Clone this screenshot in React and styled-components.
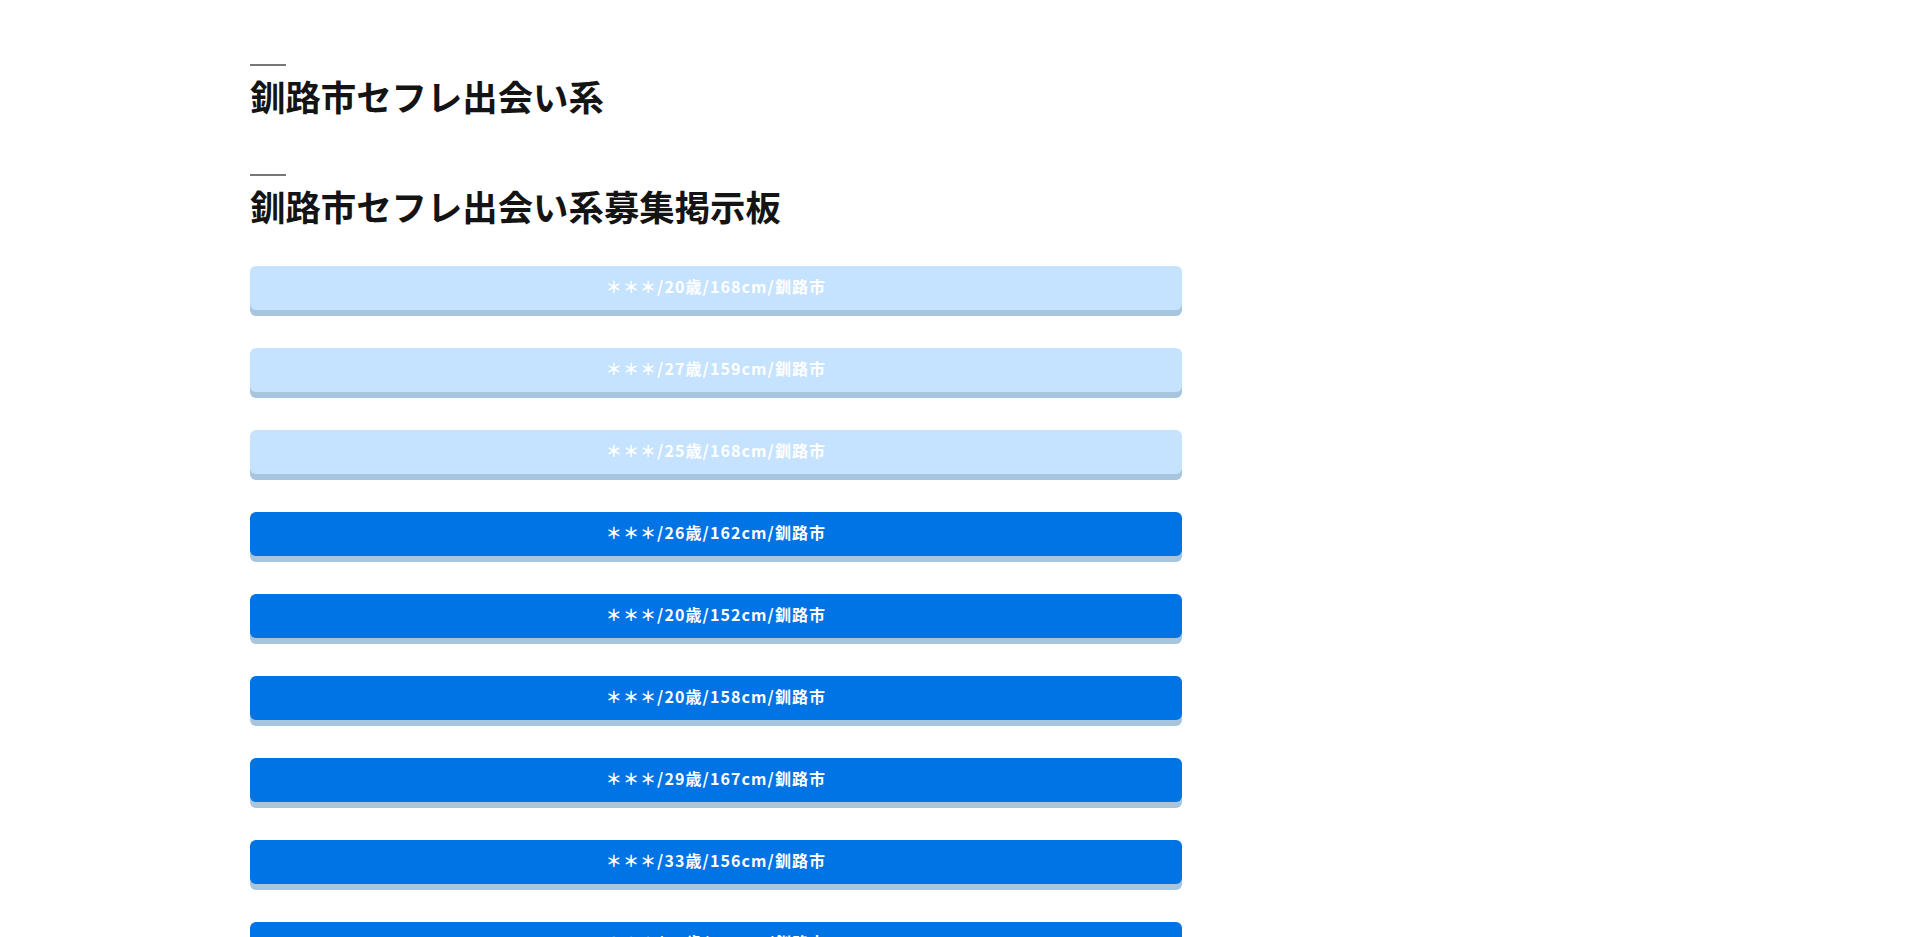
import React from 'react';
import styled, {createGlobalStyle} from 'styled-components';

const GlobalStyle = createGlobalStyle`
  html, body {
    margin: 0;
    padding: 0;
    background: #fff;
  }
  body {
    font-family: "Noto Sans CJK JP", "Noto Sans", sans-serif;
    color: #1a1a1a;
  }
`;

const Wrapper = styled.div`
  box-sizing: border-box;
  padding: 58px 0 60px 250px;
  display: grid;
  grid-template-columns: 932px 1fr;
`;

const Main = styled.main`
  display: flex;
  flex-direction: column;
`;

const Section = styled.section`
  margin-bottom: ${p => p.$gap || 0}px;
`;

const Heading = styled.h2`
  margin: 0;
  padding-top: 6px;
  font-size: 35.4px;
  line-height: 54px;
  font-weight: 700;
  color: #141414;
  &::before {
    content: '';
    display: block;
    width: 36px;
    height: 2px;
    margin-bottom: 3px;
    background: #777;
  }
`;

const List = styled.ul`
  list-style: none;
  margin: 33px 0 0;
  padding: 0;
  display: flex;
  flex-direction: column;
  gap: 38px;
`;

const PostButton = styled.a`
  box-sizing: border-box;
  display: flex;
  align-items: center;
  justify-content: center;
  height: 44px;
  padding-bottom: 4px;
  border-radius: 6px;
  background: ${p => (p.$faded ? '#c5e3fe' : '#0073e5')};
  box-shadow: 0 6px 0 #a8c5de;
  color: #fff;
  font-size: 16px;
  font-weight: 700;
  letter-spacing: 1.1px;
  text-decoration: none;
  cursor: pointer;
`;

const first = [
    [20, 168], [27, 159], [25, 168], [26, 162], [20, 152],
    [20, 158], [29, 167], [33, 156], [24, 161]
];

let seed = 7;
const rnd = () => {
    seed = (seed * 9301 + 49297) % 233280;
    return seed / 233280;
};

const posts = [...first];
while (posts.length < 113) {
    posts.push([19 + Math.floor(rnd() * 20), 148 + Math.floor(rnd() * 24)]);
}

export default function App() {
    return (
        <>
            <GlobalStyle/>
            <Wrapper>
                <Main>
                    <Section $gap={45}>
                        <Heading>釧路市セフレ出会い系</Heading>
                    </Section>
                    <Section>
                        <Heading>釧路市セフレ出会い系募集掲示板</Heading>
                        <List>
                            {posts.map(([age, height], i) => (
                                <li key={i}>
                                    <PostButton $faded={i < 3}>
                                        ＊＊＊/{age}歳/{height}cm/釧路市
                                    </PostButton>
                                </li>
                            ))}
                        </List>
                    </Section>
                </Main>
                <aside/>
            </Wrapper>
        </>
    );
}
